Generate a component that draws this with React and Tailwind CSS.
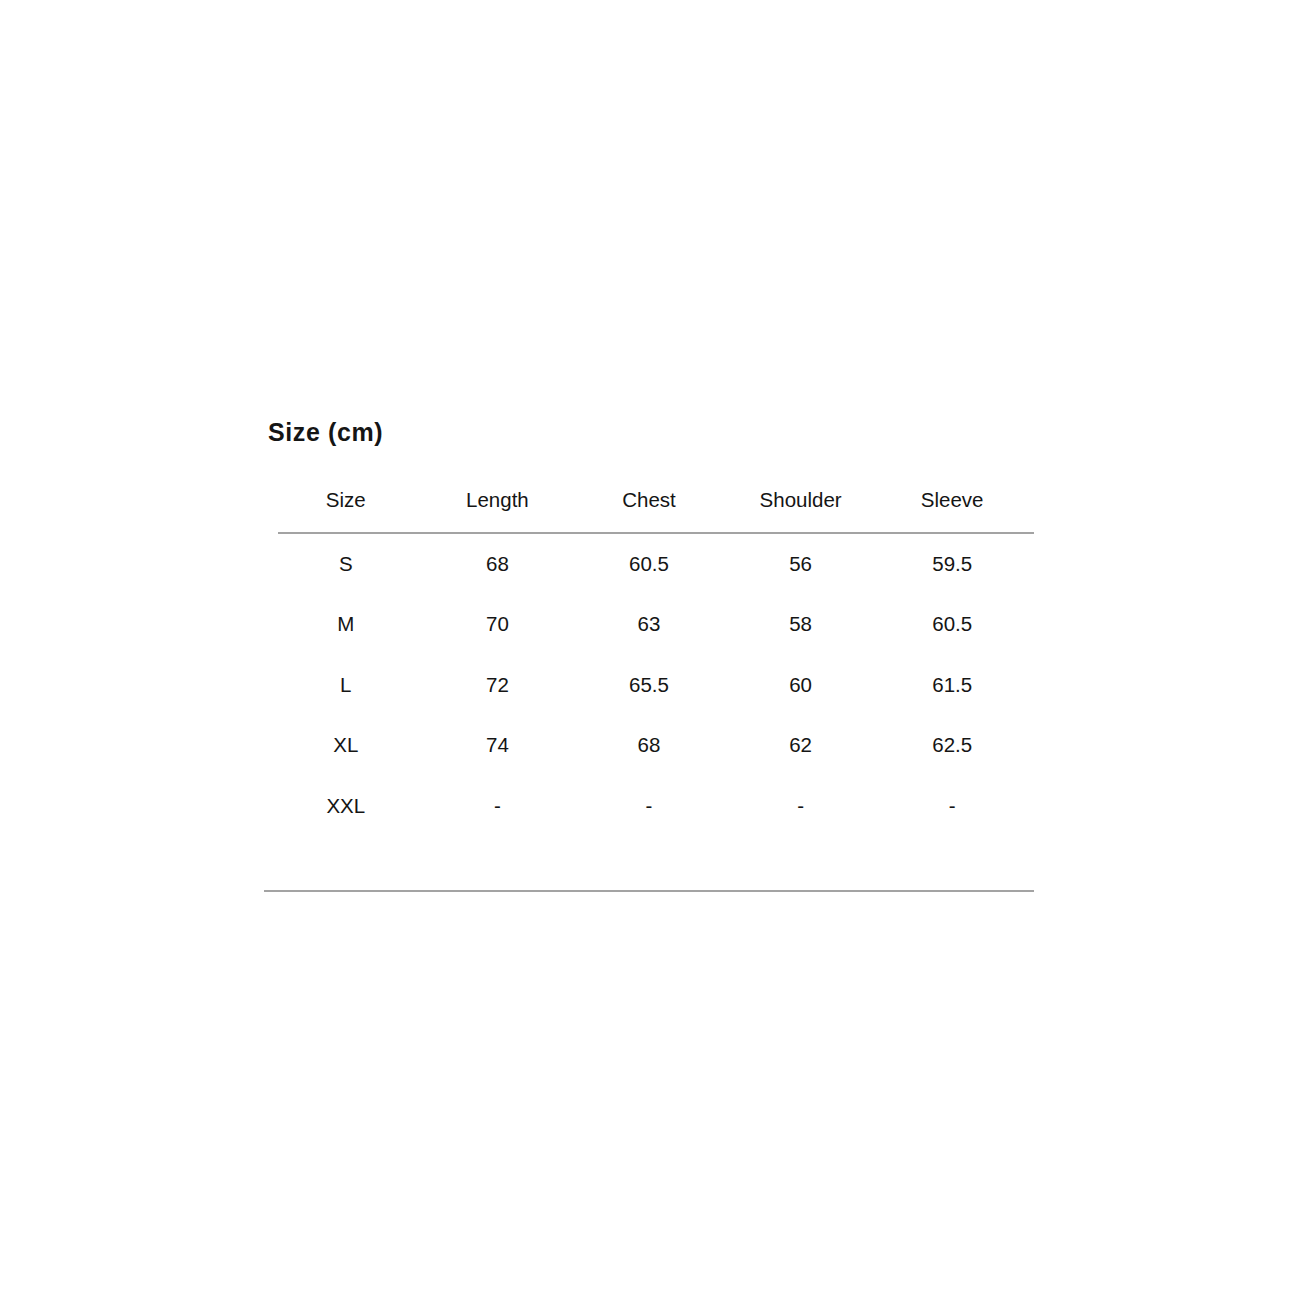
import React from 'react';

const headers = ['Size', 'Length', 'Chest', 'Shoulder', 'Sleeve'];

const rows = [
  ['S', '68', '60.5', '56', '59.5'],
  ['M', '70', '63', '58', '60.5'],
  ['L', '72', '65.5', '60', '61.5'],
  ['XL', '74', '68', '62', '62.5'],
  ['XXL', '-', '-', '-', '-'],
];

export default function App() {
  return (
    <div className="min-h-screen bg-white pt-[416px] font-['Liberation_Sans',Arial,sans-serif] text-[#151515]">
      <div className="ml-[264px] w-[770px]">
        <h2 className="pl-[4px] text-[25px] leading-[32px] font-bold tracking-[0.6px] text-[#151515]">Size (cm)</h2>

        <div className="ml-[6px] mt-[22px] grid w-[758px] grid-cols-5">
          {headers.map((h) => (
            <div key={h} className="flex h-[60px] items-center justify-center text-[20.5px]">
              {h}
            </div>
          ))}
        </div>
        <div className="ml-[14px] mt-[2px] h-[2px] w-[756px] bg-[#a3a3a3]" />

        <div className="ml-[6px] w-[758px]">
          {rows.map((r) => (
            <div key={r[0]} className="grid h-[60.5px] grid-cols-5">
              {r.map((c, i) => (
                <div key={i} className="flex items-center justify-center text-[20.5px]">
                  {c}
                </div>
              ))}
            </div>
          ))}
        </div>

        <div className="mt-[53px] h-[2px] w-[770px] bg-[#a3a3a3]" />
      </div>
    </div>
  );
}
